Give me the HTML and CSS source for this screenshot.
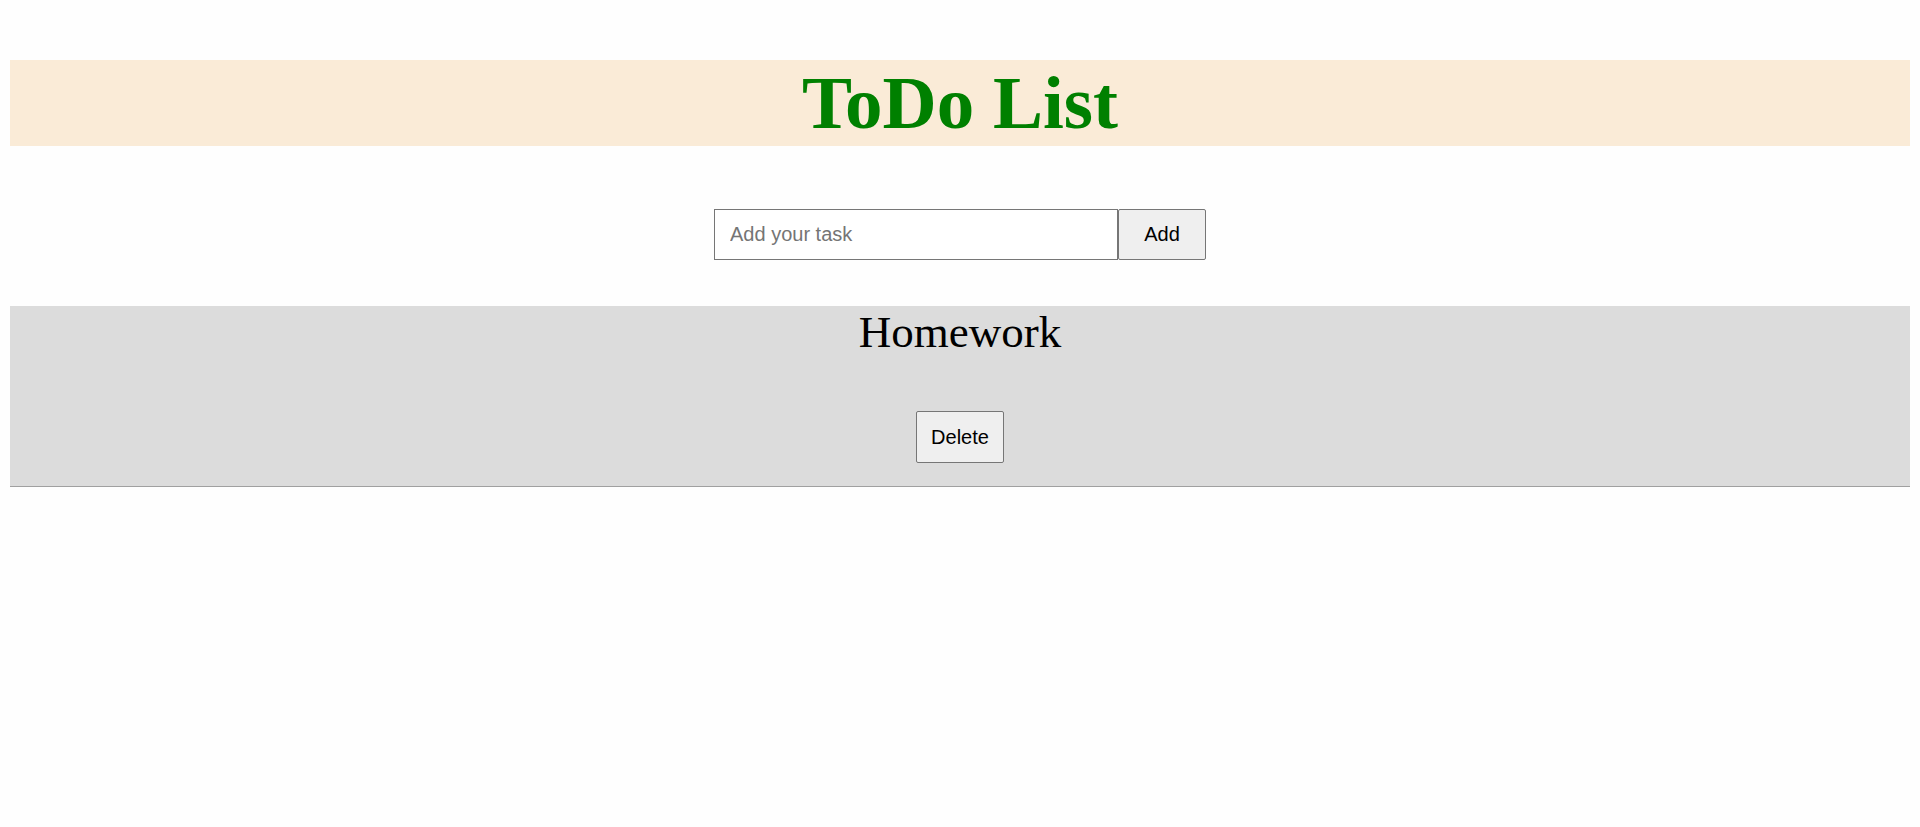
FILE: index.html
```html
<!DOCTYPE html>
<html lang="en">
<head>
<meta charset="utf-8">
<title>ToDo List</title>
<link rel="stylesheet" href="styles.css">
</head>
<body>
  <h1 class="title">ToDo List</h1>
  <form class="add-form">
    <input class="task-input" type="text" placeholder="Add your task">
    <button class="btn" type="button">Add</button>
  </form>
  <ul class="task-list">
    <li class="task">
      <div class="task-name">Homework</div>
      <button class="btn btn-delete" type="button">Delete</button>
    </li>
  </ul>
</body>
</html>
```
FILE: styles.css
```css
html, body {
  background: #fefefe;
}
body {
  margin: 0;
  padding: 60px 10px 0;
  font-family: "Liberation Serif", "Times New Roman", serif;
}
.title {
  margin: 0;
  background: #faebd7;
  color: #008000;
  text-align: center;
  font-size: 75px;
  font-weight: bold;
  line-height: 86px;
}
.add-form {
  display: flex;
  justify-content: center;
  margin: 63px 0 0;
}
.task-input {
  box-sizing: border-box;
  width: 404px;
  height: 51px;
  margin: 0;
  padding: 0 15px;
  border: 1px solid #767676;
  border-radius: 0;
  font-family: "Liberation Sans", Arial, sans-serif;
  font-size: 20px;
  color: #000;
  background: #fff;
}
.task-input::placeholder {
  color: #757575;
}
.btn {
  box-sizing: border-box;
  width: 88px;
  height: 51px;
  margin: 0;
  padding: 0;
  border: 1px solid #767676;
  border-radius: 2px;
  background: #efefef;
  color: #000;
  font-family: "Liberation Sans", Arial, sans-serif;
  font-size: 20px;
}
.task-list {
  list-style: none;
  margin: 46px 0 0;
  padding: 0;
}
.task {
  display: flex;
  flex-direction: column;
  align-items: center;
  background: #dcdcdc;
  padding-bottom: 23px;
  border-bottom: 1px solid #a0a0a0;
}
.task-name {
  font-size: 45px;
  line-height: 52px;
  color: #000;
}
.btn-delete {
  margin-top: 53px;
  height: 52px;
}
```
